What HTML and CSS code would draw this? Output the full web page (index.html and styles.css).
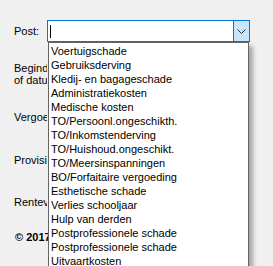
FILE: index.html
```html
<!DOCTYPE html>
<html lang="nl">
<head>
  <meta charset="UTF-8" />
  <title>Post</title>
  <link rel="stylesheet" href="styles.css">
</head>
<body>
  <div class="form">
    <div class="row row-post">
      <label class="lbl">Post:</label>
      <div class="combo">
        <div class="combo-text"><span class="caret"></span></div>
        <div class="combo-btn">
          <svg width="9" height="5" viewBox="0 0 9 5"><path d="M0.5 0.5 L4.5 4.5 L8.5 0.5" fill="none" stroke="#333" stroke-width="1"/></svg>
        </div>
        <ul class="dropdown">
          <li>Voertuigschade</li>
          <li>Gebruiksderving</li>
          <li>Kledij- en bagageschade</li>
          <li>Administratiekosten</li>
          <li>Medische kosten</li>
          <li>TO/Persoonl.ongeschikth.</li>
          <li>TO/Inkomstenderving</li>
          <li>TO/Huishoud.ongeschikt.</li>
          <li>TO/Meersinspanningen</li>
          <li>BO/Forfaitaire vergoeding</li>
          <li>Esthetische schade</li>
          <li>Verlies schooljaar</li>
          <li>Hulp van derden</li>
          <li>Postprofessionele schade</li>
          <li>Postprofessionele schade</li>
          <li>Uitvaartkosten</li>
        </ul>
      </div>
    </div>
    <div class="row row-begin"><label class="lbl">Begindatum<br>of datum:</label></div>
    <div class="row"><label class="lbl">Vergoeding:</label></div>
    <div class="row row-tall"><label class="lbl">Provisie:</label></div>
    <div class="row"><label class="lbl">Renteverschil:</label></div>
    <div class="row row-copy"><span class="lbl copy">© 2017</span></div>
  </div>
</body>
</html>
```

FILE: styles.css
```css
html, body { margin: 0; padding: 0; }
body { background: #f0f0f0; font-family: "Liberation Sans", Arial, sans-serif; font-size: 11px; color: #000; width: 273px; height: 266px; overflow: hidden; }
.form { padding: 20px 0 0 14px; display: flex; flex-direction: column; }
.row { display: flex; align-items: center; height: 42px; }
.row-post { height: 22px; }
.row-begin { margin-top: 10px; height: 44px; }
.row-tall { height: 43px; }
.row-copy { height: 28px; }
.lbl { width: 33px; overflow: hidden; white-space: nowrap; line-height: 12px; }
.copy { font-weight: bold; padding-left: 1px; }
.combo { position: relative; box-sizing: border-box; width: 203px; height: 22px; border: 1px solid #0078d7; background: #fff; display: flex; }
.combo-text { flex: 1; display: flex; align-items: center; padding-left: 2px; }
.caret { width: 1px; height: 13px; background: #000; }
.combo-btn { width: 15px; background: #cce4f7; border-left: 1px solid #0078d7; display: flex; align-items: center; justify-content: center; }
.dropdown { position: absolute; left: 0; top: 21px; box-sizing: border-box; width: 201px; margin: 0; padding: 1px 0 0; list-style: none; background: #fff; border: 1px solid #646464; box-shadow: 4px 4px 4px rgba(0, 0, 0, 0.3); }
.dropdown li { height: 14px; line-height: 14px; padding-left: 2px; white-space: nowrap; }
```
